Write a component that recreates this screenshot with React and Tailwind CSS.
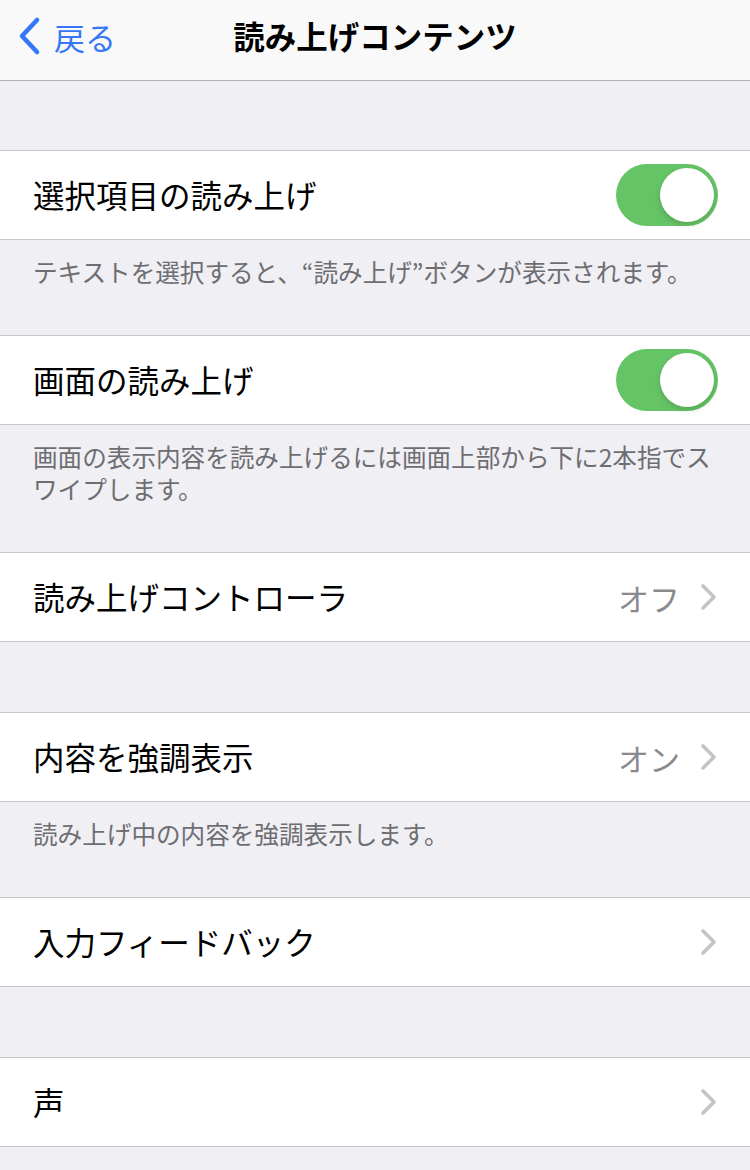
import React from 'react';

const Chevron = () => (
  <svg width="18" height="28" viewBox="0 0 18 28" className="shrink-0">
    <path d="M3 3 L14 14 L3 25" fill="none" stroke="#c4c4c7" strokeWidth="3.6" strokeLinecap="round" strokeLinejoin="round" />
  </svg>
);

const Toggle = () => (
  <div className="w-[102px] h-[62px] rounded-full bg-[#65c466] p-[4px] flex justify-end shrink-0">
    <div className="w-[54px] h-[54px] rounded-full bg-white shadow-[0_3px_6px_rgba(0,0,0,0.15)]" />
  </div>
);

const Row = ({ label, value, toggle, chevron }) => (
  <div className="h-[90px] bg-white border-y border-[#c8c7cc] flex items-center pl-[33px] pr-[32px]">
    <span className="flex-1 text-[31.5px] text-black leading-none">{label}</span>
    {value && <span className="text-[31px] text-[#8a8a8e] mr-[20px] leading-none">{value}</span>}
    {toggle && <Toggle />}
    {chevron && <Chevron />}
  </div>
);

const Footer = ({ children }) => (
  <div className="px-[33px] pt-[15px] pb-[48px] text-[24.6px] leading-[32px] text-[#6d6d72]">{children}</div>
);

export default function App() {
  return (
    <div className="w-[750px] h-[1170px] bg-[#efeff4] overflow-hidden" style={{ fontFamily: '"Noto Sans CJK JP", sans-serif' }}>
      {/* Nav bar */}
      <div className="h-[81px] bg-[#f9f9f9] border-b border-[#b2b2b2] flex items-center relative">
        <div className="flex items-center pl-[16px] text-[#3478f6] pb-[8px]">
          <svg width="26" height="40" viewBox="0 0 26 40">
            <path d="M21 4 L6 20 L21 36" fill="none" stroke="#3478f6" strokeWidth="4.6" strokeLinecap="round" strokeLinejoin="round" />
          </svg>
          <span className="ml-[12px] text-[31px] leading-none">戻る</span>
        </div>
        <div className="absolute left-0 right-0 text-center text-[31.5px] font-bold text-black pointer-events-none pb-[8px]">読み上げコンテンツ</div>
      </div>

      <div className="h-[69px]" />
      <Row label="選択項目の読み上げ" toggle />
      <Footer>テキストを選択すると、“読み上げ”ボタンが表示されます。</Footer>
      <Row label="画面の読み上げ" toggle />
      <Footer>画面の表示内容を読み上げるには画面上部から下に2本指でスワイプします。</Footer>
      <Row label="読み上げコントローラ" value="オフ" chevron />
      <div className="h-[70px]" />
      <Row label="内容を強調表示" value="オン" chevron />
      <Footer>読み上げ中の内容を強調表示します。</Footer>
      <Row label="入力フィードバック" chevron />
      <div className="h-[70px]" />
      <Row label="声" chevron />
    </div>
  );
}
